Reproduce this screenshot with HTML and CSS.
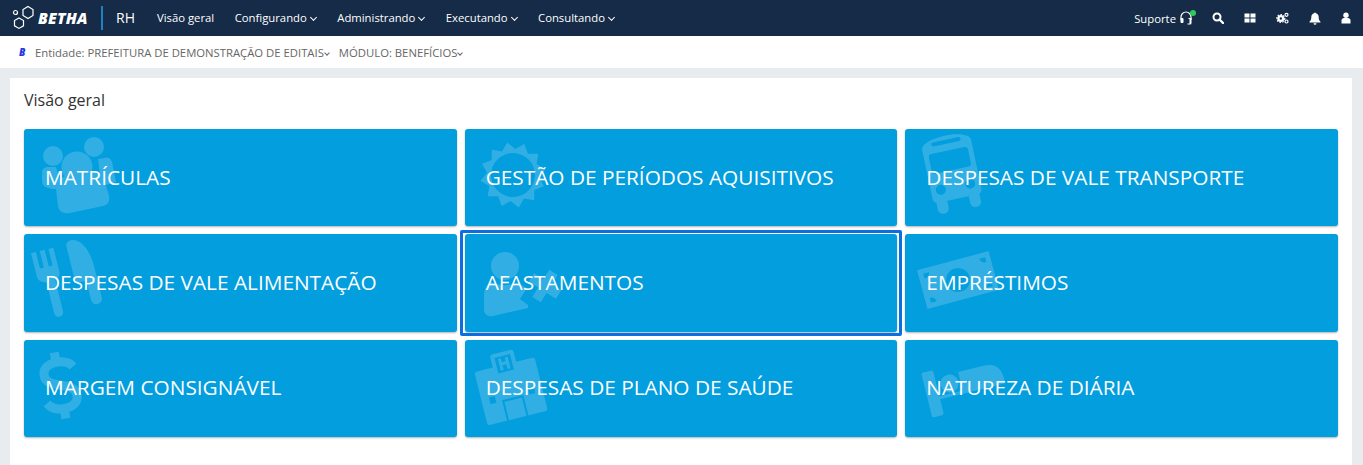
FILE: index.html
```html
<!DOCTYPE html>
<html lang="pt-BR">
<head>
    <meta charset="UTF-8">
    <meta name="viewport" content="width=device-width, initial-scale=1.0">
    <title>Visão geral</title>
    <link rel="stylesheet" href="styles.css">
</head>
<body>
    <header class="topbar">
        <div class="brand">
            <svg class="brand-logo" width="26" height="26" viewBox="0 0 26 26">
                <path d="M16 1.500l5 3v6l-5 3-5-3v-6z"/>
                <path d="M7 13l4.500 2.600v5.200l-4.500 2.600-4.500-2.600v-5.200z"/>
                <circle cx="3.500" cy="7.500" r="2"/>
            </svg>
            <span class="brand-name">BETHA</span>
        </div>
        <span class="app-name">RH</span>
        <nav class="nav">
            <a href="#">Visão geral</a>
            <a href="#">Configurando <i class="chev"></i></a>
            <a href="#">Administrando <i class="chev"></i></a>
            <a href="#">Executando <i class="chev"></i></a>
            <a href="#">Consultando <i class="chev"></i></a>
        </nav>
        <div class="tools">
            <span class="support">Suporte
                <svg width="12" height="14" viewBox="0 0 12 14">
                    <path d="M1 9V6a5 5 0 0 1 10 0v3" fill="none" stroke="#fff" stroke-width="1.200"/>
                    <rect x="0.500" y="7" width="3" height="5" rx="1" fill="#fff"/>
                    <path d="M8.500 7h3v5a1.500 1.500 0 0 1-1.500 1.500H7.500v-1H9.500V8h-1z" fill="#fff"/>
                </svg>
                <i class="dot"></i>
            </span>
            <svg class="tool" width="12" height="12" viewBox="0 0 12 12">
                <circle cx="5" cy="5" r="3.500" fill="none" stroke="#fff" stroke-width="2"/>
                <path d="M7.500 7.500L11 11" stroke="#fff" stroke-width="2.400" stroke-linecap="round"/>
            </svg>
            <svg class="tool" width="12" height="12" viewBox="0 0 12 12" fill="#fff">
                <rect x="0.500" y="1.500" width="5" height="4"/>
                <rect x="6.500" y="1.500" width="5" height="4"/>
                <rect x="0.500" y="6.500" width="5" height="4"/>
                <rect x="6.500" y="6.500" width="5" height="4"/>
            </svg>
            <svg class="tool" width="13" height="12" viewBox="0 0 13 12">
                <circle cx="4.800" cy="6.500" r="2.400" fill="none" stroke="#fff" stroke-width="2.400"/>
                <circle cx="4.800" cy="6.500" r="4" fill="none" stroke="#fff" stroke-width="1.200" stroke-dasharray="1.500 1.500"/>
                <circle cx="10.500" cy="2.800" r="1.500" fill="none" stroke="#fff" stroke-width="1.200"/>
                <circle cx="10.500" cy="9.500" r="1.500" fill="none" stroke="#fff" stroke-width="1.200"/>
            </svg>
            <svg class="tool" width="12" height="13" viewBox="0 0 12 13" fill="#fff">
                <path d="M6 .500c.5 0 .8.300.8.800 2 .4 2.900 2 2.900 3.900 0 2.300.7 3.500 1.800 4.500v.8H.5v-.8c1.100-1 1.800-2.200 1.800-4.500 0-1.900.9-3.500 2.900-3.900 0-.5.300-.8.800-.8z"/>
                <path d="M4.500 11.300h3a1.500 1.500 0 0 1-3 0z"/>
            </svg>
            <svg class="tool" width="10" height="12" viewBox="0 0 10 12" fill="#fff">
                <circle cx="5" cy="3.200" r="2.700"/>
                <path d="M.5 11.500V8.500C.5 7 1.700 6 3 6h4c1.300 0 2.500 1 2.500 2.500v3z"/>
            </svg>
        </div>
    </header>

    <div class="context">
        <span class="context-logo">B</span>
        <span class="context-item">Entidade: PREFEITURA DE DEMONSTRAÇÃO DE EDITAIS<i class="chev small"></i></span>
        <span class="context-item">MÓDULO: BENEFÍCIOS<i class="chev small"></i></span>
    </div>

    <main class="page">
        <section class="card">
            <h1 class="title">Visão geral</h1>
            <div class="tiles">
                <a class="tile" href="#">
                    <svg class="tile-icon" viewBox="0 0 120 98">
                        <circle cx="29" cy="27" r="10"/>
                        <circle cx="70" cy="18" r="10"/>
                        <circle cx="53" cy="38" r="15.500"/>
                        <path d="M18 43c0-3 3-5 6-5h8l4 14-4 8c-8 0-14-2-14-8z"/>
                        <path d="M74 30l7-1c4-1 6 1 7 4l4 20-10 3-6-10z"/>
                        <path d="M32 60c0-8 6-13 14-14l20-3c8-1 14 3 15 10l4 14c1 5-1 9-6 10l-33 7c-6 1-11-1-12-7z"/>
                    </svg>
                    <span>MATRÍCULAS</span>
                </a>
                <a class="tile" href="#">
                    <svg class="tile-icon" viewBox="0 0 120 98">
                        <path transform="translate(48 46)" fill-rule="evenodd" d="M32.500 -5.700L25.900 2.300L31 11.300L21.300 14.900L21.200 25.300L11 23.600L5.700 32.500L-2.300 25.900L-11.300 31L-14.900 21.300L-25.300 21.200L-23.600 11L-32.500 5.700L-25.900 -2.300L-31 -11.300L-21.300 -14.900L-21.200 -25.300L-11 -23.600L-5.700 -32.500L2.300 -25.900L11.300 -31L14.900 -21.300L25.300 -21.200L23.600 -11ZM22 0A22 22 0 1 0 -22 0A22 22 0 1 0 22 0Z"/>
                    </svg>
                    <span>GESTÃO DE PERÍODOS AQUISITIVOS</span>
                </a>
                <a class="tile" href="#">
                    <svg class="tile-icon" viewBox="0 0 120 98">
                        <g transform="rotate(-12 48 46)">
                            <path fill-rule="evenodd" d="M23 15c0-4 8-9 25-9s25 5 25 9v50c0 3-2 5-5 5H28c-3 0-5-2-5-5zM35 10a2 2 0 0 0 0 4h26a2 2 0 0 0 0-4zM31 21c-2 0-3 1-3 3v14c0 2 1 3 3 3h34c2 0 3-1 3-3V24c0-2-1-3-3-3zM33 53a5 5 0 1 0 0 10a5 5 0 0 0 0-10zM63 53a5 5 0 1 0 0 10a5 5 0 0 0 0-10z"/>
                            <rect x="26" y="66" width="11" height="16" rx="5"/>
                            <rect x="59" y="66" width="11" height="16" rx="5"/>
                        </g>
                    </svg>
                    <span>DESPESAS DE VALE TRANSPORTE</span>
                </a>
                <a class="tile" href="#">
                    <svg class="tile-icon" viewBox="0 0 120 98">
                        <g transform="rotate(-14 40 44)">
                            <path d="M14 12h5v17h4V12h5v17h4V12h5v24c0 5-3 7-6 8v32a4.500 4.500 0 0 1-9 0V44c-4-1-8-3-8-8z"/>
                            <path d="M50 14c0-3 2-5 5-5 11 0 17 15 17 30v33a5.500 5.500 0 0 1-11 0V52h-6c-3 0-5-2-5-5z"/>
                        </g>
                    </svg>
                    <span>DESPESAS DE VALE ALIMENTAÇÃO</span>
                </a>
                <a class="tile is-focused" href="#">
                    <svg class="tile-icon" viewBox="0 0 120 98">
                        <circle cx="40" cy="32" r="14"/>
                        <path d="M26 48c8 4 18 4 26 1l10 5-7 11 8 6v3l-35 8c-6 1-9-2-9-7V62c0-6 2-11 7-14z"/>
                        <path transform="rotate(32 80 52)" d="M75 36h10v11h11v10H85v11H75V57H64V47h11z"/>
                    </svg>
                    <span>AFASTAMENTOS</span>
                </a>
                <a class="tile" href="#">
                    <svg class="tile-icon" viewBox="0 0 120 98">
                        <path transform="rotate(-15 53 46)" fill-rule="evenodd" d="M16 26h74v40H16zM21 31v5a6 6 0 0 0 6-5zM79 31a6 6 0 0 0 6 5v-5zM21 56v5h6a6 6 0 0 0-6-5zM85 56a6 6 0 0 0-6 5h6zM53 34a12 12 0 1 0 0 24a12 12 0 0 0 0-24z"/>
                    </svg>
                    <span>EMPRÉSTIMOS</span>
                </a>
                <a class="tile" href="#">
                    <svg class="tile-icon" viewBox="0 0 120 98">
                        <path transform="rotate(-10 36 45)" d="M52 29c-3-5-9-7-15-7-9 0-15 4-15 11 0 15 29 9 29 25 0 7-6 11-15 11-7 0-13-3-16-8M36 12v10M36 69v10" fill="none" stroke="#fff" stroke-width="9"/>
                    </svg>
                    <span>MARGEM CONSIGNÁVEL</span>
                </a>
                <a class="tile" href="#">
                    <svg class="tile-icon" viewBox="0 0 120 98">
                        <path transform="rotate(-14 45 47)" fill-rule="evenodd" d="M33 14c0-2 1-3 3-3h18c2 0 3 1 3 3v10h16c2 0 3 1 3 3v49c0 2-1 3-3 3H17c-2 0-3-1-3-3V27c0-2 1-3 3-3h16zM37 15v16h16V15zM40 17h3v4h4v-4h3v12h-3v-5h-4v5h-3zM22 52v7h6v-7zM62 52v7h6v-7zM34 58v21h2V60h18v19h2V58z"/>
                    </svg>
                    <span>DESPESAS DE PLANO DE SAÚDE</span>
                </a>
                <a class="tile" href="#">
                    <svg class="tile-icon" viewBox="0 0 120 98">
                        <g transform="translate(0 -6) rotate(-14 55 50)">
                            <rect x="20" y="30" width="12" height="46" rx="2"/>
                            <circle cx="45" cy="47" r="9"/>
                            <path d="M56 38h27c10 0 16 6 16 16v6H56z"/>
                            <rect x="30" y="57" width="69" height="3"/>
                        </g>
                    </svg>
                    <span>NATUREZA DE DIÁRIA</span>
                </a>
            </div>
        </section>
    </main>
</body>
</html>
```

FILE: styles.css
```css
* {
    padding: 0;
    margin: 0;
    box-sizing: border-box;
}

html,
body {
    height: 100%;
    overflow: hidden;
}

body {
    background-color: #e9ecef;
    font-family: "Open Sans", "Liberation Sans", sans-serif;
    color: #333;
}

a {
    color: inherit;
    text-decoration: none;
}

.topbar {
    height: 36px;
    display: flex;
    align-items: center;
    background-color: #152b47;
    color: #fff;
    padding-left: 12px;
}

.brand {
    display: flex;
    align-items: center;
    height: 24px;
    width: 91px;
    border-right: 2px solid #1d83c4;
}

.brand-logo {
    flex: none;
    fill: none;
    stroke: #fff;
    stroke-width: 1.200;
}

.brand-name {
    font-size: 15.500px;
    font-weight: 800;
    font-style: italic;
    letter-spacing: .2px;
}

.app-name {
    font-size: 14px;
    margin-left: 13px;
    width: 41px;
    padding-bottom: 2px;
}

.nav {
    display: flex;
    gap: 20.500px;
    font-size: 11.300px;
    padding-bottom: 2px;
}

.chev {
    display: inline-block;
    width: 5px;
    height: 5px;
    margin: 0 1px 2px 1px;
    border-right: 1.200px solid currentColor;
    border-bottom: 1.200px solid currentColor;
    transform: rotate(45deg);
}

.chev.small {
    width: 4px;
    height: 4px;
    margin: 0 0 2px 1px;
    border-width: 1px;
}

.tools {
    display: flex;
    align-items: center;
    gap: 20px;
    margin-left: auto;
    padding-right: 12px;
}

.support {
    position: relative;
    display: flex;
    align-items: center;
    gap: 4px;
    font-size: 11.300px;
}

.dot {
    position: absolute;
    top: -1px;
    right: -4px;
    width: 6px;
    height: 6px;
    border-radius: 50%;
    background-color: #2ecc5f;
}

.context {
    height: 32px;
    display: flex;
    align-items: center;
    gap: 10px;
    background-color: #fff;
    padding-left: 19px;
    font-size: 11.300px;
    color: #666;
}

.context-logo {
    width: 6px;
    font-size: 10px;
    font-weight: 800;
    font-style: italic;
    color: #2438e0;
}

.page {
    padding: 10px 11px 0 10px;
}

.card {
    background-color: #fff;
    height: 400px;
    padding: 12px 14px;
}

.title {
    font-size: 16px;
    font-weight: 400;
    line-height: 20px;
    margin-bottom: 19px;
}

.tiles {
    display: grid;
    grid-template-columns: repeat(3, 1fr);
    grid-auto-rows: 97.400px;
    gap: 8px;
}

.tile {
    position: relative;
    display: flex;
    align-items: center;
    padding: 0 0 2px 21px;
    overflow: hidden;
    border-radius: 3px;
    background-color: #039ede;
    box-shadow: 0 1px 2px rgba(0, 0, 0, .3);
    color: #fff;
    font-size: 20.800px;
}

.tile span {
    position: relative;
}

.tile.is-focused {
    overflow: visible;
}

.tile.is-focused::after {
    content: "";
    position: absolute;
    inset: -4.500px;
    border: 3px solid #0b6fe3;
    border-radius: 2px;
}

.tile-icon {
    position: absolute;
    left: 0;
    top: 0;
    width: 120px;
    height: 98px;
    fill: #fff;
    opacity: .18;
}
```
